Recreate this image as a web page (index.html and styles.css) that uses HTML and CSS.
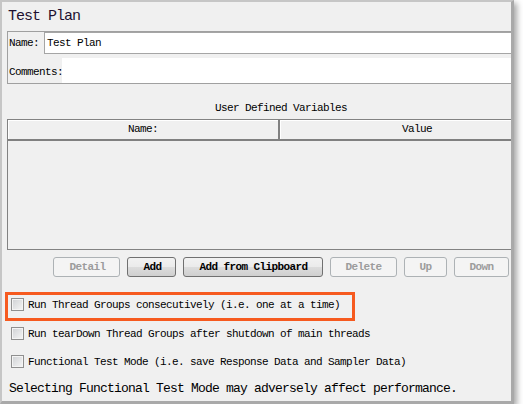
FILE: index.html
```html
<!DOCTYPE html>
<html lang="en">
<head>
    <meta charset="UTF-8">
    <title>Test Plan</title>
    <link rel="stylesheet" href="styles.css">
</head>
<body>
<div class="window">
    <div class="panel">
        <div class="title">Test Plan</div>

        <div class="group">
            <div class="field-row">
                <span class="label label-name">Name:</span>
                <div class="text-field">Test Plan</div>
            </div>
            <div class="field-row field-row-tall">
                <span class="label">Comments:</span>
                <div class="text-area"></div>
            </div>
        </div>

        <div class="table-title">User Defined Variables</div>
        <div class="table">
            <div class="table-head">
                <div class="head-cell head-cell-first">Name:</div>
                <div class="head-cell">Value</div>
            </div>
            <div class="table-body"></div>
        </div>

        <div class="buttons">
            <button class="btn" disabled>Detail</button>
            <button class="btn">Add</button>
            <button class="btn">Add from Clipboard</button>
            <button class="btn" disabled>Delete</button>
            <button class="btn" disabled>Up</button>
            <button class="btn" disabled>Down</button>
        </div>

        <!-- 第一项加了橙色标注框 -->
        <div class="check-row marked">
            <span class="checkbox"></span>
            <span class="check-label">Run Thread Groups consecutively (i.e. one at a time)</span>
        </div>
        <div class="check-row">
            <span class="checkbox"></span>
            <span class="check-label">Run tearDown Thread Groups after shutdown of main threads</span>
        </div>
        <div class="check-row">
            <span class="checkbox"></span>
            <span class="check-label">Functional Test Mode (i.e. save Response Data and Sampler Data)</span>
        </div>

        <div class="note">Selecting Functional Test Mode may adversely affect performance.</div>
    </div>
</div>
</body>
</html>
```

FILE: styles.css
```css
/* 重置默认样式 */
* {
    margin: 0;
    padding: 0;
    box-sizing: border-box;
}
body {
    background: #ffffff;
    color: #000000;
    font-family: "Liberation Mono", "DejaVu Sans Mono", monospace;
    font-size: 11px;
    letter-spacing: -0.6px;
}
.window {
    width: 514px;
    height: 404px;
    border-style: solid;
    border-width: 2px 3px 3px 2px;
    border-color: #c6c6c6 #a9a9a9 #a9a9a9 #c6c6c6;
    background: #f0f0f0;
    overflow: hidden;
    box-shadow: 3px 3px 6px rgba(0, 0, 0, .35);
}
.panel {
    width: 553px;
    padding: 5px 0 0 5px;
}
.title {
    margin-left: 1px;
    font-size: 15px;
    letter-spacing: -1px;
    line-height: 20px;
    color: #1e1030;
}

/* Name / Comments */
.group {
    margin-top: 4px;
    padding-left: 1px;
    border: 1px solid #a0a0a0;
}
.field-row {
    display: flex;
    height: 22px;
}
.label {
    line-height: 22px;
}
.label-name {
    margin-right: 5px;
}
.text-field {
    flex: 1;
    padding-left: 2px;
    line-height: 20px;
    background: #ffffff;
    border: 1px solid #a5a5a5;
}
.field-row-tall {
    height: 25px;
    margin-top: 4px;
    align-items: flex-start;
}
.field-row-tall .label {
    margin-right: -1px;
    padding-top: 6px;
    line-height: 17px;
}
.text-area {
    flex: 1;
    height: 25px;
    background: #ffffff;
}

/* 变量表格 */
.table-title {
    margin-top: 16px;
    line-height: 16px;
    text-align: center;
}
.table {
    margin-top: 3px;
    border: 1px solid #828282;
}
.table-head {
    display: flex;
    height: 21px;
    border-bottom: 2px solid #808080;
}
.head-cell {
    flex: 1;
    line-height: 19px;
    text-align: center;
    box-shadow: inset 1px 1px #ffffff;
}
.head-cell-first {
    flex: none;
    width: 272px;
    border-right: 2px solid #808080;
}
.table-body {
    height: 108px;
}

/* 按钮 */
.buttons {
    display: flex;
    justify-content: center;
    gap: 7px;
    margin-top: 7px;
}
.btn {
    height: 20px;
    padding: 0 14px 0 15px;
    font-family: "Liberation Mono", "DejaVu Sans Mono", monospace;
    font-size: 11px;
    font-weight: bold;
    letter-spacing: -0.6px;
    line-height: 18px;
    color: #000000;
    background: linear-gradient(#f2f2f2 0%, #ebebeb 50%, #dddddd 50%, #cfcfcf 100%);
    border: 1px solid #707070;
    border-radius: 3px;
}
.btn:disabled {
    color: #9c9c9c;
    background: #f4f4f4;
    border-color: #adb2b5;
}

/* 复选框 */
.check-row {
    display: flex;
    align-items: flex-start;
    height: 28px;
    padding-left: 4px;
}
.check-row.marked {
    width: fit-content;
    height: 23px;
    margin: 18px 0 6px 1px;
    padding: 0 12px 0 3px;
    outline: 3px solid #f65a1f;
}
.checkbox {
    width: 13px;
    height: 13px;
    margin: 3px 4px 0 0;
    border: 1px solid #8f8f8f;
    background: linear-gradient(135deg, #cfd1d4, #f6f6f6);
    box-shadow: inset 0 0 0 1px #f4f4f4;
}
.check-label {
    padding-top: 1px;
    line-height: 19px;
    white-space: nowrap;
}
.note {
    margin-left: 2px;
    font-size: 13px;
    letter-spacing: -0.8px;
    line-height: 18px;
}
```
